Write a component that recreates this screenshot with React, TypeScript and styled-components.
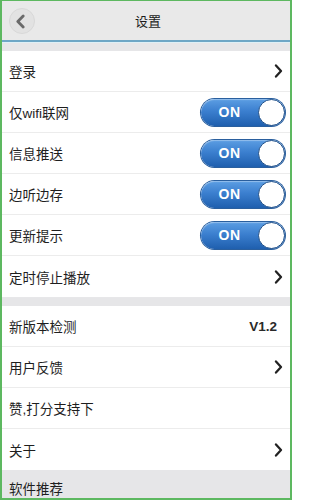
import React from "react";
import styled, { createGlobalStyle } from "styled-components";

const GlobalStyle = createGlobalStyle`
  html, body {
    margin: 0;
    padding: 0;
    background: #ffffff;
  }
  body {
    font-family: "Liberation Sans", "Noto Sans CJK SC", sans-serif;
  }
`;

type Item =
  | { label: string; kind: "arrow" }
  | { label: string; kind: "toggle" }
  | { label: string; kind: "value"; value: string }
  | { label: string; kind: "none" };

const firstGroup: Item[] = [
  { label: "登录", kind: "arrow" },
  { label: "仅wifi联网", kind: "toggle" },
  { label: "信息推送", kind: "toggle" },
  { label: "边听边存", kind: "toggle" },
  { label: "更新提示", kind: "toggle" },
  { label: "定时停止播放", kind: "arrow" },
];

const secondGroup: Item[] = [
  { label: "新版本检测", kind: "value", value: "V1.2" },
  { label: "用户反馈", kind: "arrow" },
  { label: "赞,打分支持下", kind: "none" },
  { label: "关于", kind: "arrow" },
];

const Chevron = () => (
  <svg width="9" height="14" viewBox="0 0 9 15">
    <path d="M1.8 1.5 L7.2 7.5 L1.8 13.5" fill="none" stroke="#222" strokeWidth="2.4" strokeLinecap="round" strokeLinejoin="round" />
  </svg>
);

const BackChevron = () => (
  <svg width="11" height="15" viewBox="0 0 10 14">
    <path d="M7.5 1.8 L2.5 7 L7.5 12.2" fill="none" stroke="#6a6a6a" strokeWidth="2.6" strokeLinecap="round" strokeLinejoin="round" />
  </svg>
);

const Toggle = () => (
  <Switch>
    <SwitchText>ON</SwitchText>
    <Knob />
  </Switch>
);

const renderRight = (item: Item) => {
  switch (item.kind) {
    case "arrow":
      return <Chevron />;
    case "toggle":
      return <Toggle />;
    case "value":
      return <Value>{item.value}</Value>;
    default:
      return null;
  }
};

const App = () => {
  return (
    <>
      <GlobalStyle />
      <Page lang="zh-CN">
        <Header>
          <BackButton>
            <BackChevron />
          </BackButton>
          <Title>设置</Title>
        </Header>
        <Gap />
        <Group>
          {firstGroup.map((item) => (
            <Row key={item.label}>
              <Label>{item.label}</Label>
              <Right>{renderRight(item)}</Right>
            </Row>
          ))}
        </Group>
        <Gap />
        <Group>
          {secondGroup.map((item) => (
            <Row key={item.label}>
              <Label>{item.label}</Label>
              <Right>{renderRight(item)}</Right>
            </Row>
          ))}
        </Group>
        <SectionHeader>软件推荐</SectionHeader>
      </Page>
    </>
  );
};

export default App;

const Page = styled.div`
  box-sizing: border-box;
  width: 292px;
  height: 500px;
  overflow: hidden;
  display: flex;
  flex-direction: column;
  border: 2px solid #5db860;
  border-top-width: 1px;
  background: #e7e7e9;
`;

const Header = styled.div`
  position: relative;
  flex: none;
  height: 39px;
  display: flex;
  align-items: center;
  justify-content: center;
  background: #e9e9e9;
  border-bottom: 2px solid #6ea7c6;
  box-shadow: 0 1px 0 #dff0f6;
`;

const BackButton = styled.div`
  position: absolute;
  left: 7px;
  top: 7px;
  width: 26px;
  height: 26px;
  border-radius: 50%;
  background: #e2e2e2;
  border: 1px solid #d8d8d8;
  display: flex;
  align-items: center;
  justify-content: center;
  padding-right: 3px;
  box-sizing: border-box;
`;

const Title = styled.div`
  font-size: 13px;
  color: #1c1c1c;
  margin-left: 4px;
`;

const Gap = styled.div`
  flex: none;
  height: 8px;
  background: #e6e6e8;
  margin-top: 1px;
`;

const Group = styled.div`
  flex: none;
  background: #ffffff;
`;

const Row = styled.div`
  box-sizing: border-box;
  height: 41px;
  display: flex;
  align-items: center;
  justify-content: space-between;
  padding: 0 5px 0 7px;
  border-bottom: 1px solid #ececec;
  &:last-child {
    border-bottom: none;
  }
`;

const Label = styled.span`
  font-size: 13.5px;
  color: #1e1e1e;
`;

const Right = styled.div`
  display: flex;
  align-items: center;
  padding-right: 2px;
`;

const Value = styled.span`
  font-size: 13.5px;
  font-weight: bold;
  color: #2a2a2a;
  margin-right: 6px;
`;

const Switch = styled.div`
  position: relative;
  width: 84px;
  height: 27px;
  margin-right: -2px;
  border-radius: 14px;
  background: linear-gradient(to bottom, #5c9ee3 0%, #3b7fcf 45%, #1f5fae 100%);
  box-shadow: inset 0 1px 1px rgba(255, 255, 255, 0.35), 0 0 0 1px #2a5f9e;
  display: flex;
  align-items: center;
`;

const SwitchText = styled.span`
  width: 57px;
  text-align: center;
  font-size: 14px;
  font-weight: bold;
  color: #ffffff;
  letter-spacing: 0.5px;
`;

const Knob = styled.div`
  position: absolute;
  right: 0;
  top: 0;
  box-sizing: border-box;
  width: 27px;
  height: 27px;
  border-radius: 50%;
  background: #ffffff;
  border: 1.5px solid #1f4f88;
`;

const SectionHeader = styled.div`
  flex: 1;
  display: flex;
  align-items: flex-end;
  padding: 0 7px;
  font-size: 13.5px;
  line-height: 16px;
  color: #1e1e1e;
  background: #e6e6e8;
`;
